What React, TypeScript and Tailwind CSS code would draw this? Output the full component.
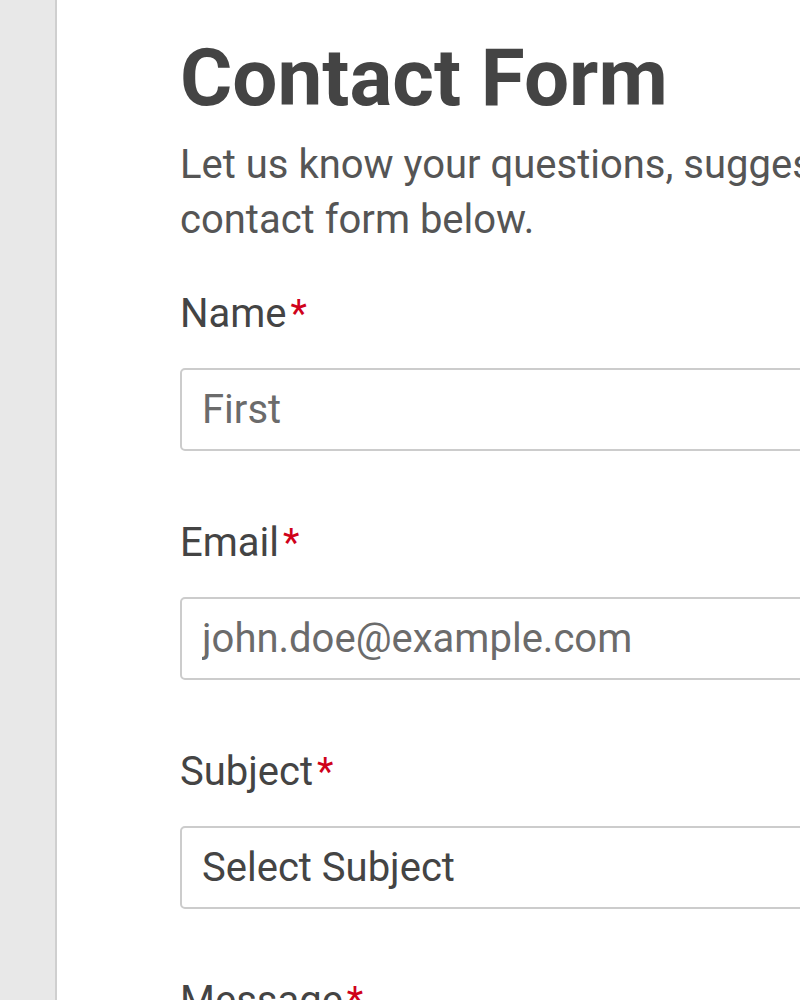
export default function App() {
	const fields = [
		{ label: "Name", placeholder: "First", type: "text" },
		{ label: "Email", placeholder: "john.doe@example.com", type: "email" },
	];

	return (
		<div
			className="flex w-[800px] h-[1000px] overflow-hidden bg-white"
			style={{ fontFamily: "Roboto, 'Noto Sans', sans-serif" }}
		>
			<div className="w-[57px] shrink-0 bg-[#e8e8e8] border-r-2 border-[#cfcfcf]"></div>
			<div className="shrink-0 w-[1000px] pl-[123px] pt-[38px]">
				<h1 className="text-[80px] leading-[80px] font-bold text-[#444]">
					Contact Form
				</h1>
				<p className="mt-[19px] text-[40px] leading-[55px] text-[#555] whitespace-nowrap">
					Let us know your questions, suggestions and concerns by filling out the
					<br />
					contact form below.
				</p>

				<form className="mt-[40px] w-[900px]">
					{fields.map((f) => (
						<div key={f.label} className="mb-[65px]">
							<label className="block text-[40px] leading-[54px] text-[#444]">
								{f.label}
								<span className="text-[#d0021b] ml-[4px] text-[38px]">*</span>
							</label>
							<input
								type={f.type}
								placeholder={f.placeholder}
								className="mt-[27px] block w-full h-[83px] px-[20px] text-[40px] text-[#444] placeholder:text-[#6b6b6b] border-2 border-[#cccccc] rounded-[5px] outline-none"
							/>
						</div>
					))}
					<div className="mb-[65px]">
						<label className="block text-[40px] leading-[54px] text-[#444]">
							Subject
							<span className="text-[#d0021b] ml-[4px] text-[38px]">*</span>
						</label>
						<select
							defaultValue=""
							className="mt-[27px] block w-full h-[83px] px-[20px] text-[40px] text-[#444] bg-white border-2 border-[#cccccc] rounded-[5px] outline-none appearance-none"
						>
							<option value="">Select Subject</option>
							<option value="general">General</option>
							<option value="support">Support</option>
						</select>
					</div>
					<div>
						<label className="block text-[40px] leading-[54px] text-[#444]">
							Message
							<span className="text-[#d0021b] ml-[4px] text-[38px]">*</span>
						</label>
					</div>
				</form>
			</div>
		</div>
	);
}
